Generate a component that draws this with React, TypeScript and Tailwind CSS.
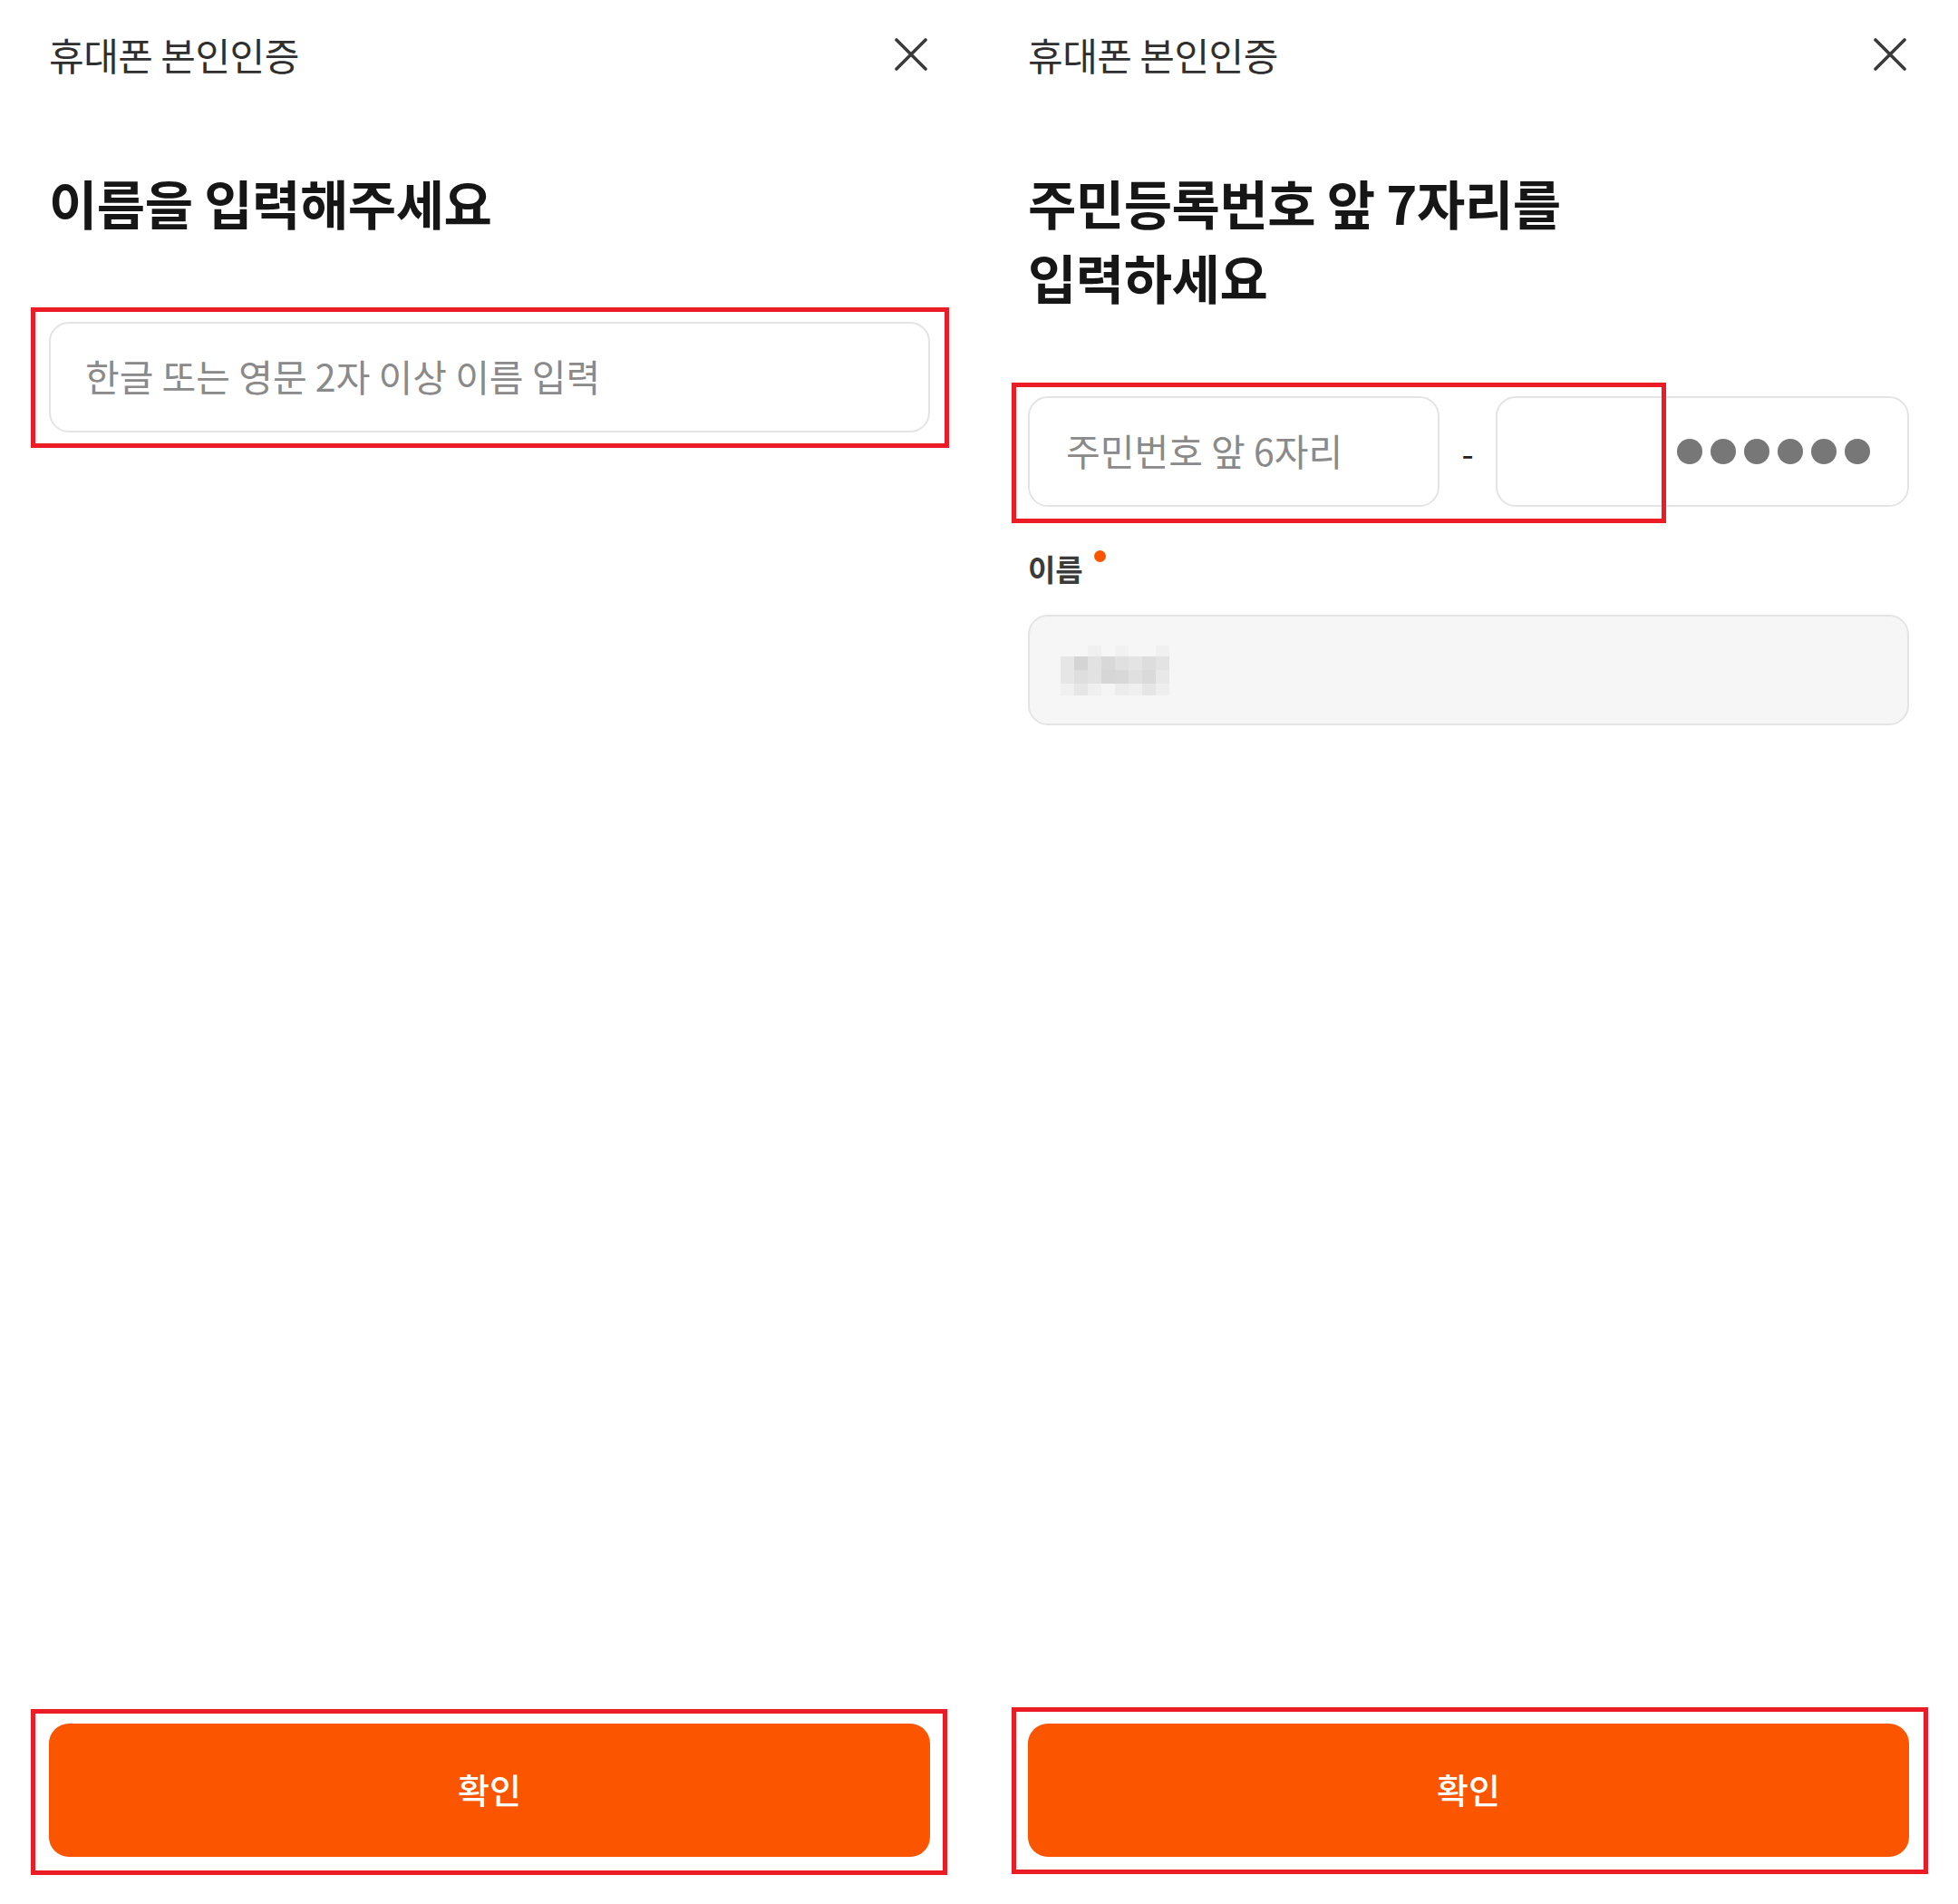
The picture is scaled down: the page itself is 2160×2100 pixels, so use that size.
import React from "react";

const mosaic = [
  ["bg-[#f6f6f6]", "bg-[#f6f6f6]", "bg-[#f0f0f0]", "bg-[#f6f6f6]", "bg-[#f1f1f1]", "bg-[#f6f6f6]", "bg-[#f6f6f6]", "bg-[#f0f0f0]"],
  ["bg-[#e6e6e6]", "bg-[#d4d4d4]", "bg-[#e2e2e2]", "bg-[#d8d8d8]", "bg-[#e0e0e0]", "bg-[#e4e4e4]", "bg-[#dddddd]", "bg-[#e3e3e3]"],
  ["bg-[#e6e6e6]", "bg-[#dedede]", "bg-[#e2e2e2]", "bg-[#d6d6d6]", "bg-[#d8d8d8]", "bg-[#e0e0e0]", "bg-[#dadada]", "bg-[#e8e8e8]"],
  ["bg-[#f0f0f0]", "bg-[#e6e6e6]", "bg-[#efefef]", "bg-[#f5f5f5]", "bg-[#ececec]", "bg-[#efefef]", "bg-[#e6e6e6]", "bg-[#eeeeee]"],
];

const CloseIcon = () => (
  <svg width="36" height="36" viewBox="0 0 36 36" fill="none">
    <path d="M2 2L34 34M34 2L2 34" stroke="#3a3a3a" strokeWidth="3.6" strokeLinecap="round" />
  </svg>
);

const Header = () => (
  <div className="flex h-[120px] items-center justify-between">
    <span className="text-[42px] leading-none tracking-[-0.5px] text-[#2f2f2f]">휴대폰 본인인증</span>
    <button className="mr-[3px]">
      <CloseIcon />
    </button>
  </div>
);

const ConfirmButton = () => (
  <button className="mt-auto mb-[52px] flex h-[147px] w-full items-center justify-center rounded-[22px] bg-[#fb5500] pb-[4px] text-[38px] font-medium text-white">
    확인
  </button>
);

// 주석용 빨간 테두리
const Marker = ({ className }: { className: string }) => (
  <div className={`pointer-events-none absolute border-[5px] border-[#ec1c27] ${className}`} />
);

const NamePanel = () => (
  <div className="relative flex h-[2100px] w-[1080px] flex-col px-[54px]">
    <Header />
    <h1 className="mt-[62px] text-[58px] font-bold leading-[82px] tracking-[-0.5px] text-[#161616]">
      이름을 입력해주세요
    </h1>
    <input
      readOnly
      placeholder="한글 또는 영문 2자 이상 이름 입력"
      className="mt-[91px] h-[122px] w-full rounded-[22px] border-2 border-[#e4e4e4] bg-white pb-[4px] pl-[38px] text-[41px] outline-none placeholder:text-[#8a8a8a]"
    />
    <ConfirmButton />
    <Marker className="left-[34px] top-[339px] h-[155px] w-[1013px]" />
    <Marker className="left-[34px] top-[1885px] h-[183px] w-[1011px]" />
  </div>
);

const IdPanel = () => (
  <div className="relative flex h-[2100px] w-[1080px] flex-col px-[54px]">
    <Header />
    <h1 className="mt-[62px] text-[58px] font-bold leading-[82px] tracking-[-0.5px] text-[#161616]">
      주민등록번호 앞 7자리를
      <br />
      입력하세요
    </h1>

    <div className="mt-[91px] flex h-[122px] items-center">
      <input
        readOnly
        placeholder="주민번호 앞 6자리"
        className="h-full w-[454px] rounded-[22px] border-2 border-[#e4e4e4] bg-white pb-[4px] pl-[40px] text-[41px] outline-none placeholder:text-[#8a8a8a]"
      />
      <span className="w-[62px] text-center text-[38px] text-[#222]">-</span>
      <div className="flex h-full flex-1 items-center rounded-[22px] border-2 border-[#e4e4e4] bg-white pr-[41px]">
        <input readOnly className="h-full min-w-0 flex-1 bg-transparent outline-none" />
        <div className="flex gap-[9px]">
          {[0, 1, 2, 3, 4, 5].map((i) => (
            <span key={i} className="h-[28px] w-[28px] rounded-full bg-[#777777]" />
          ))}
        </div>
      </div>
    </div>

    <div className="mt-[48px] flex items-start">
      <span className="text-[33px] font-semibold leading-[40px] text-[#3b3b3b]">이름</span>
      <span className="ml-[12px] mt-[0px] h-[13px] w-[13px] rounded-full bg-[#fb5500]" />
    </div>

    <div className="mt-[31px] flex h-[122px] w-full items-center rounded-[22px] border-2 border-[#e4e4e4] bg-[#f6f6f6] pl-[34px]">
      <div className="grid grid-cols-[repeat(8,15px)] grid-rows-[12px_15px_15px_13px]">
        {mosaic.flat().map((c, i) => (
          <span key={i} className={c} />
        ))}
      </div>
    </div>

    <ConfirmButton />
    <Marker className="left-[36px] top-[422px] h-[155px] w-[722px]" />
    <Marker className="left-[36px] top-[1883px] h-[184px] w-[1011px]" />
  </div>
);

export default function App() {
  return (
    <div className="flex h-[2100px] w-[2160px] bg-white font-['Noto_Sans_CJK_KR','Noto_Sans',sans-serif]">
      <NamePanel />
      <IdPanel />
    </div>
  );
}
